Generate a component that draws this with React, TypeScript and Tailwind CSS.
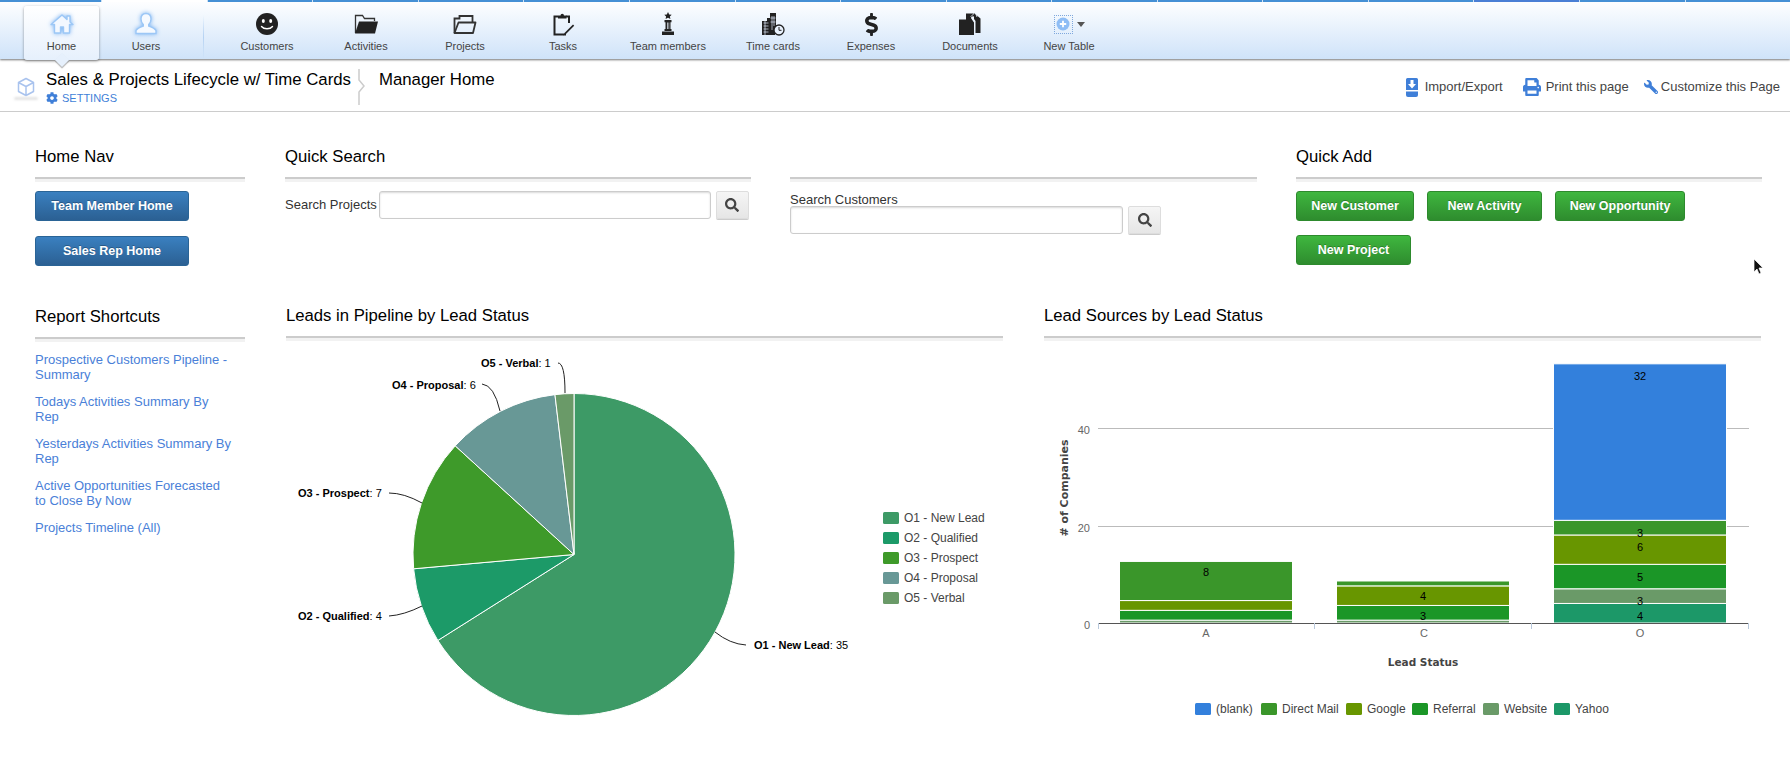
import type { ReactNode } from 'react';
import { FaCog, FaPrint, FaSearch, FaWrench, FaDollarSign } from 'react-icons/fa';

const glow = 'drop-shadow-[0_0_2px_#7db4f2]';

function HomeIcon() {
  return (
    <svg width="26" height="24" viewBox="0 0 26 24" className={glow}>
      <path d="M13 3 2 12.500h3.500V21h6v-6h3v6h6v-8.500H24L21 10V4h-3v3.500z" fill="#f3f8ff" stroke="#9cc7f6" strokeWidth="1.400" strokeLinejoin="round" />
    </svg>
  );
}

function UserIcon() {
  return (
    <svg width="26" height="24" viewBox="0 0 26 24" className={glow}>
      <path d="M13 1.500c3.400 0 5 2.600 5 5.500 0 2.400-1 4.400-2.300 5.600v1.400c2.800 1 6.300 2.300 7.300 4.500v3H3v-3c1-2.200 4.500-3.500 7.300-4.500v-1.400C9 11.400 8 9.400 8 7c0-2.900 1.600-5.500 5-5.500z" fill="#f6faff" stroke="#9cc7f6" strokeWidth="1.400" />
    </svg>
  );
}

function SmileyIcon() {
  return (
    <svg width="24" height="24" viewBox="0 0 24 24">
      <circle cx="12" cy="12" r="11" fill="#222" />
      <ellipse cx="8.300" cy="9" rx="1.500" ry="2" fill="#fff" />
      <ellipse cx="15.700" cy="9" rx="1.500" ry="2" fill="#fff" />
      <path d="M6.500 14.500c2.500 3 8.500 3 11 0" fill="none" stroke="#fff" strokeWidth="1.400" strokeLinecap="round" />
    </svg>
  );
}

function FolderFilledIcon() {
  return (
    <svg width="24" height="24" viewBox="0 0 24 24">
      <path d="M1.500 21V3.500h7l2 3h10V9" fill="none" stroke="#333" strokeWidth="1.300" />
      <path d="M5 9.500h19L21 21.500H1z" fill="#222" />
    </svg>
  );
}

function FolderOutlineIcon() {
  return (
    <svg width="24" height="24" viewBox="0 0 24 24">
      <path d="M1.500 21V6.500h5V4h13v6" fill="none" stroke="#333" strokeWidth="1.800" />
      <path d="M5.500 10.500h17L20 21H1.500z" fill="none" stroke="#333" strokeWidth="1.800" strokeLinejoin="round" />
    </svg>
  );
}

function TasksIcon() {
  return (
    <svg width="24" height="24" viewBox="0 0 24 24">
      <path d="M7 4.500H3.500V22.500H15M15 4.500H18V11" fill="none" stroke="#222" strokeWidth="2" />
      <path d="M7 6.500V3.500h2.500a1.700 1.700 0 0 1 3.500 0h2.500v3z" fill="#222" />
      <path d="M22 12.500 14 20.500l-2 3 3.200-1.800 8-8z" fill="#222" />
    </svg>
  );
}

function TeamIcon() {
  return (
    <svg width="24" height="24" viewBox="0 0 24 24">
      <path d="m12 0 1.200 2.500 2.500.3-1.800 1.700.5 2.500L12 5.800 9.600 7l.5-2.500-1.800-1.700 2.500-.3z" fill="#222" />
      <path d="M8.500 8h7v2.200H14.500V17h1v2h-7v-2h1v-6.800h-1zM11 10.500v6.500h.7v-6.500zM12.600 10.500v6.500h.6v-6.500z" fill="#222" fillRule="evenodd" />
      <path d="M6 19.500h12V23H6z" fill="#222" />
    </svg>
  );
}

function TimeCardsIcon() {
  return (
    <svg width="24" height="24" viewBox="0 0 24 24">
      <path d="M1 9h5V6h3v17H1z" fill="#222" />
      <path d="M9 1h6v12h4v3.500A6 6 0 0 0 14 23H9z" fill="#222" />
      <path d="M2.500 11h5M2.500 14h5M2.500 17h5M2.500 20h5M4 9v14M11 4v14M13 4v10M9.500 6h5M9.500 10h5" stroke="#dfeafa" strokeWidth=".7" />
      <circle cx="18" cy="18" r="5" fill="#e8f1fc" stroke="#222" strokeWidth="1.300" />
      <path d="M18 15v3.300h2.500" fill="none" stroke="#222" strokeWidth="1" />
    </svg>
  );
}

function DocumentsIcon() {
  return (
    <svg width="24" height="24" viewBox="0 0 24 24">
      <path d="M16 1 22.500 6.500V21h-5V9l-1.500-2z" fill="#222" />
      <path d="M8 1.500h7.500l2.500 5-3-2.500-2 2 3 4.500V23H1V7.500h7z" fill="#222" />
      <path d="M16 1.500 13 4.500l3 5M17.500 1 19 5" fill="none" stroke="#eaf2fd" strokeWidth=".8" />
    </svg>
  );
}

function NewTableIcon() {
  return (
    <div className="flex items-center">
      <div className="flex h-[19px] w-[19px] items-center justify-center border border-dotted border-[#7fa8dd]">
        <svg width="14" height="14" viewBox="0 0 14 14">
          <circle cx="7" cy="7" r="6.500" fill="#8ebdf5" />
          <path d="M7 3.800v6.400M3.800 7h6.400" stroke="#fff" strokeWidth="1.800" />
        </svg>
      </div>
      <svg width="8" height="5" viewBox="0 0 8 5" className="ml-[4px]">
        <path d="M0 0h8L4 5z" fill="#555" />
      </svg>
    </div>
  );
}

function NavItem({ label, width, icon, active }: { label: string; width: string; icon: ReactNode; active?: boolean }) {
  return (
    <div className={`relative flex flex-col items-center ${width} ${active ? 'mt-[6px] h-[54px] rounded-[3px] bg-gradient-to-b from-white to-[#e6f0fc] pt-[6px] shadow-[0_1px_3px_rgba(0,0,0,0.4)]' : 'mt-[12px] h-[48px]'}`}>
      <div className="flex h-[24px] items-center">{icon}</div>
      <div className="mt-[4px] text-[11px] leading-[13px] whitespace-nowrap text-[#444]">{label}</div>
      {active && <div className="absolute bottom-[-5px] left-[33px] h-[10px] w-[10px] rotate-45 bg-[#e6f0fc] shadow-[1px_1px_1px_rgba(0,0,0,0.3)]" />}
    </div>
  );
}

function Section({ title, className, children }: { title: string; className: string; children: ReactNode }) {
  return (
    <div className={className}>
      <h2 className="text-[16.700px] leading-[26px] text-black">{title}</h2>
      <div className="mt-[7px] h-[5px] border-t-2 border-[#ccc] bg-[#f2f2f2]" />
      {children}
    </div>
  );
}

function BlueButton({ label }: { label: string }) {
  return (
    <button className="h-[30px] w-[154px] rounded-[3px] border border-[#2a6496] bg-gradient-to-b from-[#3a80c0] to-[#2b6093] pt-px text-[12.500px] font-bold text-white [text-shadow:0_-1px_0_rgba(0,0,0,0.25)]">
      {label}
    </button>
  );
}

function GreenButton({ label, width }: { label: string; width: string }) {
  return (
    <button className={`h-[30px] rounded-[3px] border border-[#2d8a2d] bg-gradient-to-b from-[#3fb73f] to-[#2e8c2e] pt-px text-[12.500px] font-bold text-white [text-shadow:0_-1px_0_rgba(0,0,0,0.25)] ${width}`}>
      {label}
    </button>
  );
}

function SearchBox({ inputWidth }: { inputWidth: string }) {
  return (
    <>
      <input className={`h-[28px] rounded-[3px] border border-[#ccc] bg-white shadow-[inset_0_1px_2px_rgba(0,0,0,0.15)] ${inputWidth}`} />
      <button className="ml-[5px] flex h-[28px] w-[33px] items-center justify-center rounded-[2px] border border-[#ddd] bg-gradient-to-b from-[#f5f5f5] to-[#e6e6e6] shadow-[0_1px_0_#ccc]">
        <FaSearch size={14} className="text-[#444]" />
      </button>
    </>
  );
}

const pieSlices = [
  { name: 'O1 - New Lead', value: 35, color: '#3d9a66' },
  { name: 'O2 - Qualified', value: 4, color: '#1c9a68' },
  { name: 'O3 - Prospect', value: 7, color: '#3e9a2a' },
  { name: 'O4 - Proposal', value: 6, color: '#689896' },
  { name: 'O5 - Verbal', value: 1, color: '#6a9a68' },
];

const pieLabels = [
  { name: 'O1 - New Lead', value: 35, x: 754, y: 648, line: 'M715 631Q730 643 746 644' },
  { name: 'O2 - Qualified', value: 4, x: 298, y: 619, line: 'M422 605Q404 614 389 615' },
  { name: 'O3 - Prospect', value: 7, x: 298, y: 496, line: 'M422 502Q404 492 389 492' },
  { name: 'O4 - Proposal', value: 6, x: 392, y: 388, line: 'M500 410Q494 384 482 383' },
  { name: 'O5 - Verbal', value: 1, x: 481, y: 366, line: 'M565 392Q565 362 558 362' },
];

function PieChart() {
  const cx = 574;
  const cy = 553.5;
  const r = 161;
  const total = 53;
  let angle = 0;
  const point = (a: number) => `${cx + r * Math.sin(a)} ${cy - r * Math.cos(a)}`;
  return (
    <svg width="717" height="400" viewBox="286 340 717 400" className="block">
      {pieSlices.map((s) => {
        const start = angle;
        angle += (s.value / total) * Math.PI * 2;
        const large = angle - start > Math.PI ? 1 : 0;
        return <path key={s.name} d={`M${cx} ${cy}L${point(start)}A${r} ${r} 0 ${large} 1 ${point(angle)}Z`} fill={s.color} stroke="#fff" strokeWidth="1" />;
      })}
      {pieLabels.map((l) => (
        <g key={l.name}>
          <path d={l.line} fill="none" stroke="#222" strokeWidth="1" />
          <text x={l.x} y={l.y} fontSize="11" fill="#000">
            <tspan fontWeight="bold">{l.name}</tspan>: {l.value}
          </text>
        </g>
      ))}
      {pieSlices.map((s, i) => (
        <g key={s.name}>
          <rect x="883" y={511 + i * 20} width="16" height="12" rx="1.500" fill={s.color} />
          <text x="904" y={521 + i * 20} fontSize="12" fill="#444">{s.name}</text>
        </g>
      ))}
    </svg>
  );
}

const barColors: Record<string, string> = {
  blank: '#3380dc',
  direct: '#3a962a',
  google: '#689600',
  referral: '#1b9627',
  website: '#6a9a68',
  yahoo: '#1c9868',
};

const bars = [
  { x: 1120, base: 624, stack: [['website', 1], ['referral', 2], ['google', 2], ['direct', 8]] as [string, number][] },
  { x: 1337, base: 624, stack: [['website', 1], ['referral', 3], ['google', 4], ['direct', 1]] as [string, number][] },
  { x: 1554, base: 622, stack: [['yahoo', 4], ['website', 3], ['referral', 5], ['google', 6], ['direct', 3], ['blank', 32]] as [string, number][] },
];

const barValues = [
  { x: 1206, y: 575, v: '8' },
  { x: 1423, y: 599, v: '4' },
  { x: 1423, y: 619, v: '3' },
  { x: 1640, y: 379, v: '32' },
  { x: 1640, y: 536, v: '3' },
  { x: 1640, y: 550, v: '6' },
  { x: 1640, y: 580, v: '5' },
  { x: 1640, y: 604, v: '3' },
  { x: 1640, y: 619, v: '4' },
];

const barLegend = [
  { name: '(blank)', color: 'blank', x: 1195 },
  { name: 'Direct Mail', color: 'direct', x: 1261 },
  { name: 'Google', color: 'google', x: 1346 },
  { name: 'Referral', color: 'referral', x: 1412 },
  { name: 'Website', color: 'website', x: 1483 },
  { name: 'Yahoo', color: 'yahoo', x: 1554 },
];

function BarChart() {
  const unit = 4.89;
  return (
    <svg width="717" height="400" viewBox="1044 340 717 400" className="block">
      <path d="M1098 427.500H1749M1098 525.500H1749" stroke="#bbb" strokeWidth="1" />
      {bars.map((b) => {
        let base = b.base;
        return b.stack.map(([key, n]) => {
          const bottom = Math.min(base, 622);
          base -= n * unit;
          return <rect key={`${b.x}-${key}`} x={b.x - 0.5} y={base} width="173" height={bottom - base} fill={barColors[key]} stroke="#fff" strokeWidth="1" />;
        });
      })}
      <path d="M1098 622.500H1749" stroke="#555" strokeWidth="1" />
      <path d="M1098.500 622V628M1314.500 622V628M1531.500 622V628M1748.500 622V628" stroke="#b9c9dc" strokeWidth="1" />
      {barValues.map((t) => (
        <text key={`${t.x}-${t.y}`} x={t.x} y={t.y} fontSize="11" textAnchor="middle" fill="#000">{t.v}</text>
      ))}
      <text x="1090" y="433" fontSize="11" textAnchor="end" fill="#666">40</text>
      <text x="1090" y="531" fontSize="11" textAnchor="end" fill="#666">20</text>
      <text x="1090" y="628" fontSize="11" textAnchor="end" fill="#666">0</text>
      <text x="1206" y="636" fontSize="11" textAnchor="middle" fill="#666">A</text>
      <text x="1424" y="636" fontSize="11" textAnchor="middle" fill="#666">C</text>
      <text x="1640" y="636" fontSize="11" textAnchor="middle" fill="#666">O</text>
      <text x="1423" y="665" fontSize="10.500" fontWeight="bold" textAnchor="middle" fill="#444" fontFamily="DejaVu Sans, sans-serif">Lead Status</text>
      <text x="1068" y="487" fontSize="11" fontWeight="bold" textAnchor="middle" fill="#444" fontFamily="DejaVu Sans, sans-serif" transform="rotate(-90 1068 487)"># of Companies</text>
      {barLegend.map((l) => (
        <g key={l.name}>
          <rect x={l.x} y="702" width="16" height="12" rx="1.500" fill={barColors[l.color]} />
          <text x={l.x + 21} y="712" fontSize="12" fill="#444">{l.name}</text>
        </g>
      ))}
    </svg>
  );
}

const strip = Array.from({ length: 16 }, (_, i) => i);

const links = [
  'Prospective Customers Pipeline - Summary',
  'Todays Activities Summary By Rep',
  'Yesterdays Activities Summary By Rep',
  'Active Opportunities Forecasted to Close By Now',
  'Projects Timeline (All)',
];

export default function App() {
  return (
    <div className="relative h-[778px] w-[1790px] overflow-hidden bg-white font-[Liberation_Sans,Arial,sans-serif]">
      {/* Top nav */}
      <div className="relative z-10 h-[59px] bg-gradient-to-b from-white to-[#cfe3f9] shadow-[0_1px_2px_rgba(0,0,0,0.55)]">
        <div className="flex h-[2px]">
          <div className="w-[104px] bg-[#4590d5]" />
          {strip.map((i) => (
            <div key={i} className={`w-[108.330px] border-l border-[#cfe3f5] ${i === 0 ? 'bg-white' : i === 13 ? 'bg-[#4a7fd5]' : 'bg-[#4590d5]'}`} />
          ))}
        </div>
        <div className="-mt-[2px] flex pl-[24px]">
          <NavItem label="Home" width="w-[75px]" icon={<HomeIcon />} active />
          <NavItem label="Users" width="w-[94px]" icon={<UserIcon />} />
          <div className="mt-[15px] ml-[10px] mr-[9px] h-[45px] w-px bg-gradient-to-b from-transparent via-[#b5d2f2] to-transparent" />
          <NavItem label="Customers" width="w-[108px]" icon={<SmileyIcon />} />
          <NavItem label="Activities" width="w-[90px]" icon={<FolderFilledIcon />} />
          <NavItem label="Projects" width="w-[108px]" icon={<FolderOutlineIcon />} />
          <NavItem label="Tasks" width="w-[88px]" icon={<TasksIcon />} />
          <NavItem label="Team members" width="w-[122px]" icon={<TeamIcon />} />
          <NavItem label="Time cards" width="w-[88px]" icon={<TimeCardsIcon />} />
          <NavItem label="Expenses" width="w-[108px]" icon={<FaDollarSign size={23} className="text-[#222]" />} />
          <NavItem label="Documents" width="w-[90px]" icon={<DocumentsIcon />} />
          <NavItem label="New Table" width="w-[108px]" icon={<NewTableIcon />} />
        </div>
      </div>

      {/* Sub header */}
      <div className="flex h-[53px] border-b border-[#ccc] pl-[14px]">
        <div className="mt-[18px] flex flex-col items-center">
          <svg width="20" height="20" viewBox="0 0 20 20">
            <path d="M10 1.500 17.500 5.500v9L10 18.500l-7.500-4v-9zM2.500 5.500 10 9.500l7.500-4M10 9.500v9" fill="none" stroke="#a9c3ee" strokeWidth="1.500" strokeLinejoin="round" />
          </svg>
          <div className="h-[3px] w-[24px] rounded-full bg-[#e4e4e4] blur-[1px]" />
        </div>
        <div className="ml-[8px] pt-[11px]">
          <div className="text-[16.800px] leading-[20px] whitespace-nowrap text-black">Sales &amp; Projects Lifecycle w/ Time Cards</div>
          <div className="mt-[2px] flex items-center text-[11px] leading-[12px] text-[#3f7fd8]">
            <FaCog size={12} className="mr-[4px] text-[#3f7fd8]" />
            SETTINGS
          </div>
        </div>
        <svg width="10" height="36" viewBox="0 0 10 36" className="mt-[10px] ml-[7px]">
          <path d="M1 0V11L6 17 1 23V36" fill="none" stroke="#ccc" strokeWidth="1.500" />
        </svg>
        <div className="ml-[11px] pt-[11px] text-[16.800px] leading-[20px] text-black">Manager Home</div>
        <div className="mt-[18px] ml-auto flex h-[20px] items-center pr-[10px] text-[13px] text-[#444]">
          <svg width="12" height="19" viewBox="0 0 12 19">
            <path d="M0 1.500A1.500 1.500 0 0 1 1.500 0h9A1.500 1.500 0 0 1 12 1.500V12H0z" fill="#3f7fd8" />
            <path d="M4.500 2h3v4H10L6 10.500 2 6h2.500z" fill="#fff" />
            <path d="M0 13.500h12V17a2 2 0 0 1-2 2H2a2 2 0 0 1-2-2z" fill="#3f7fd8" />
          </svg>
          <span className="ml-[7px]">Import/Export</span>
          <FaPrint size={18} className="ml-[20px] text-[#3f7fd8]" />
          <span className="ml-[5px]">Print this page</span>
          <FaWrench size={14} className="ml-[15px] -scale-x-100 text-[#3f7fd8]" />
          <span className="ml-[3px]">Customize this Page</span>
        </div>
      </div>

      {/* Row 1 */}
      <div className="flex h-[192px] pt-[32px] pl-[35px]">
        <Section title="Home Nav" className="w-[210px]">
          <div className="mt-[9px] flex flex-col items-start gap-[15px]">
            <BlueButton label="Team Member Home" />
            <BlueButton label="Sales Rep Home" />
          </div>
        </Section>
        <Section title="Quick Search" className="ml-[40px] w-[466px]">
          <div className="mt-[9px] flex items-center">
            <span className="mr-[2px] text-[13px] whitespace-nowrap text-[#333]">Search Projects</span>
            <SearchBox inputWidth="w-[332px]" />
          </div>
        </Section>
        <Section title={'\u00a0'} className="ml-[39px] w-[467px]">
          <div className="mt-[11px] text-[13px] leading-[13px] text-[#333]">Search Customers</div>
          <div className="flex">
            <SearchBox inputWidth="w-[333px]" />
          </div>
        </Section>
        <Section title="Quick Add" className="ml-[39px] w-[466px]">
          <div className="mt-[9px] flex flex-wrap gap-x-[13px] gap-y-[14px]">
            <GreenButton label="New Customer" width="w-[118px]" />
            <GreenButton label="New Activity" width="w-[115px]" />
            <GreenButton label="New Opportunity" width="w-[130px]" />
            <GreenButton label="New Project" width="w-[115px]" />
          </div>
        </Section>
      </div>

      {/* Row 2 */}
      <div className="flex pl-[35px]">
        <Section title="Report Shortcuts" className="w-[210px]">
          <div className="mt-[10px] flex flex-col gap-[12px] pr-[12px]">
            {links.map((l) => (
              <a key={l} className="text-[13px] leading-[15px] text-[#4a7fd8]">{l}</a>
            ))}
          </div>
        </Section>
        <Section title="Leads in Pipeline by Lead Status" className="-mt-px ml-[41px] w-[717px]">
          <PieChart />
        </Section>
        <Section title="Lead Sources by Lead Status" className="-mt-px ml-[41px] w-[717px]">
          <BarChart />
        </Section>
      </div>

      {/* Mouse cursor */}
      <svg width="12" height="17" viewBox="0 0 12 17" className="absolute top-[258px] left-[1753px]">
        <path d="M1 1v13l3-3 2 5 2-1-2-5h4z" fill="#111" stroke="#fff" strokeWidth=".7" />
      </svg>
    </div>
  );
}
